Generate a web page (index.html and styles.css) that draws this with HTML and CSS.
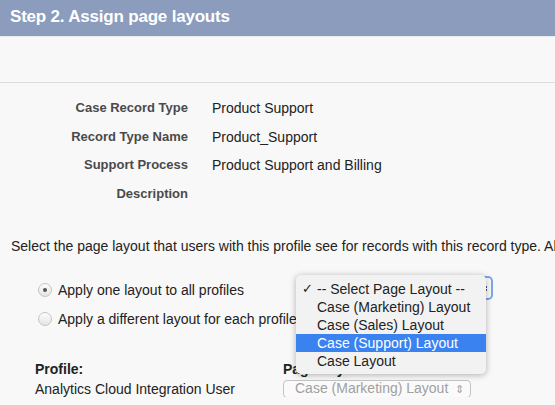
FILE: index.html
```html
<!DOCTYPE html>
<html lang="en">
<head>
  <meta charset="UTF-8">
  <title>Step 2. Assign page layouts</title>
  <link rel="stylesheet" href="styles.css">
</head>
<body>
  <div class="step-header">
    <h2>Step 2. Assign page layouts</h2>
  </div>
  <div class="step-spacer"></div>

  <div class="details">
    <div class="label">Case Record Type</div>
    <div class="value">Product Support</div>
    <div class="label">Record Type Name</div>
    <div class="value">Product_Support</div>
    <div class="label">Support Process</div>
    <div class="value">Product Support and Billing</div>
    <div class="label">Description</div>
    <div class="value"></div>
  </div>

  <p class="intro">Select the page layout that users with this profile see for records with this record type. All</p>

  <div class="options">
    <div class="option">
      <span class="radio checked"></span>
      <span>Apply one layout to all profiles</span>
      <span class="select-focus"></span>
      <div class="menu">
        <div class="menu-item selected"><span class="check">&#10003;</span>-- Select Page Layout --</div>
        <div class="menu-item">Case (Marketing) Layout</div>
        <div class="menu-item">Case (Sales) Layout</div>
        <div class="menu-item active">Case (Support) Layout</div>
        <div class="menu-item">Case Layout</div>
      </div>
    </div>
    <div class="option">
      <span class="radio"></span>
      <span>Apply a different layout for each profile</span>
    </div>
  </div>

  <div class="profiles">
    <div class="col-head">Profile:</div>
    <div class="col-head">Page Layout</div>
    <div>Analytics Cloud Integration User</div>
    <div><span class="select-disabled">Case (Marketing) Layout <span class="arrows">&#8661;</span></span></div>
  </div>
</body>
</html>
```

FILE: styles.css
```css
body {
  margin: 0;
  font-family: "Liberation Sans", Arial, sans-serif;
  font-size: 14px;
  color: #222;
  background-color: #f8f8f8;
  overflow: hidden;
}

.step-header {
  height: 37px;
  background-color: #8b9cbd;
  border-bottom: 1px solid #e9ebf1;
  box-sizing: border-box;
}

.step-header h2 {
  margin: 0;
  padding: 7px 0 0 10px;
  font-size: 17px;
  font-weight: bold;
  color: #fff;
  letter-spacing: -0.2px;
}

.step-spacer {
  height: 45px;
  border-bottom: 1px solid #dcdcdc;
}

.details {
  display: grid;
  grid-template-columns: 188px 1fr;
  column-gap: 24px;
  grid-auto-rows: 28.5px;
  padding-top: 11px;
}

.details .label {
  text-align: right;
  font-size: 13px;
  font-weight: bold;
  color: #4a4a4a;
  line-height: 28.5px;
}

.details .value {
  line-height: 28.5px;
}

.intro {
  margin: 30px 0 0 11px;
  line-height: 16px;
  white-space: nowrap;
}

.options {
  margin-top: 21.5px;
  padding-left: 38px;
}

.option {
  position: relative;
  display: flex;
  align-items: center;
  gap: 6px;
  height: 29px;
  white-space: nowrap;
}

.radio {
  width: 14px;
  height: 14px;
  border-radius: 50%;
  box-sizing: border-box;
  border: 1px solid #c4c4c4;
  background: linear-gradient(#fdfdfd, #e4e4e4);
  position: relative;
}

.radio.checked::after {
  content: "";
  position: absolute;
  left: 4px;
  top: 4px;
  width: 4px;
  height: 4px;
  border-radius: 50%;
  background-color: #555;
}

/* the focused select behind the open menu */
.select-focus {
  position: absolute;
  left: 446px;
  top: 0;
  width: 7px;
  height: 20px;
  border: 2px solid #7aa7e8;
  border-left: none;
  border-radius: 0 5px 5px 0;
  background-color: #fafafa;
}

.select-focus::before {
  content: "";
  position: absolute;
  left: 1px;
  top: 8px;
  width: 2px;
  height: 5px;
  border-top: 2px dotted #555;
  border-bottom: 2px dotted #555;
  box-sizing: border-box;
}

.menu {
  position: absolute;
  left: 258px;
  top: -1px;
  width: 190px;
  padding: 5px 0 4px;
  background-color: #f2f2f2;
  border-radius: 5px;
  box-shadow: 0 1px 6px rgba(0,0,0,0.3);
  z-index: 2;
}

.menu-item {
  height: 18px;
  line-height: 18px;
  padding-left: 21px;
  color: #222;
  position: relative;
}

.menu-item .check {
  position: absolute;
  left: 6px;
  font-size: 13px;
}

.menu-item.active {
  background-color: #3a82f0;
  color: #fff;
}

.profiles {
  display: grid;
  grid-template-columns: 248px 1fr;
  grid-auto-rows: 16px;
  align-items: center;
  margin-top: 27.5px;
  padding-left: 35px;
  row-gap: 4px;
  line-height: 16px;
}

.col-head {
  font-weight: bold;
}

.select-disabled {
  display: inline-block;
  border: 1px solid #c4c4c4;
  border-radius: 4px;
  padding: 0 6px 0 11px;
  line-height: 15px;
  color: #a0a0a0;
  background-color: #fafafa;
  white-space: nowrap;
}

.arrows {
  font-size: 11px;
  margin-left: 3px;
}
```
